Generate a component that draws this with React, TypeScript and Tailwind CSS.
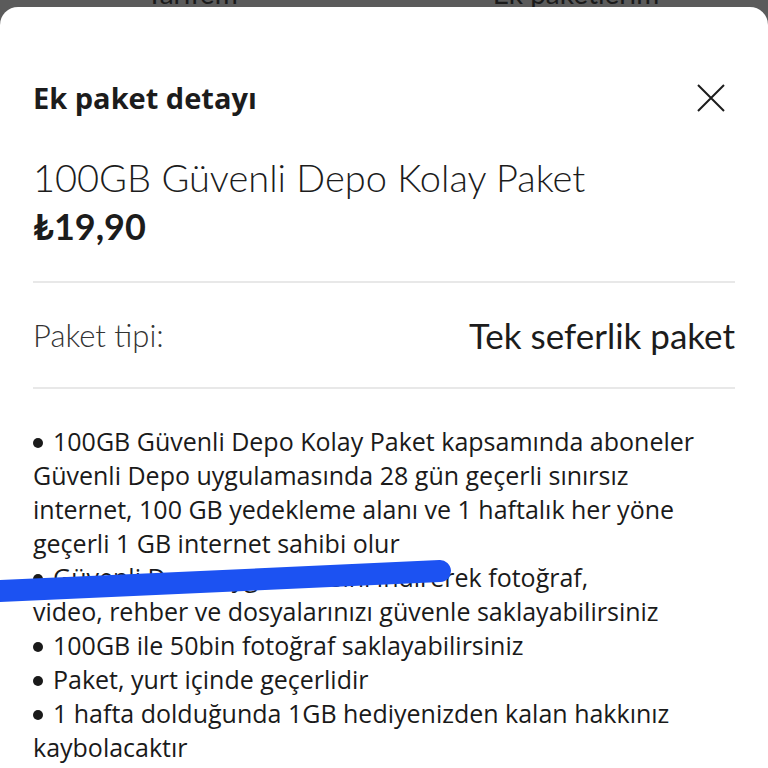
import { Fragment } from 'react'

const bullets = [
    ['100GB Güvenli Depo Kolay Paket kapsamında aboneler', 'Güvenli Depo uygulamasında 28 gün geçerli sınırsız', 'internet, 100 GB yedekleme alanı ve 1 haftalık her yöne', 'geçerli 1 GB internet sahibi olur'],
    ['Güvenli Depo uygulamasını indirerek fotoğraf,', 'video, rehber ve dosyalarınızı güvenle saklayabilirsiniz'],
    ['100GB ile 50bin fotoğraf saklayabilirsiniz'],
    ['Paket, yurt içinde geçerlidir'],
    ['1 hafta dolduğunda 1GB hediyenizden kalan hakkınız', 'kaybolacaktır'],
]

export default function App() {
    return (
        <Fragment>
            <div className="relative w-[768px] h-[768px] overflow-hidden bg-[#5b5b5b] font-['Lato',sans-serif]">
                <div className="h-[7px] overflow-hidden">
                    <div className="flex -mt-[24px] text-[28px] leading-[34px] text-[#1a1a1a]">
                        <span className="w-[384px] text-center">Tarifem</span>
                        <span className="w-[384px] text-center">Ek paketlerim</span>
                    </div>
                </div>
                <div className="bg-white rounded-t-[18px] h-[761px] px-[33px] text-[#1c1c1c]">
                    <div className="flex items-center justify-between pt-[74px]">
                        <h1 className="text-[29px] leading-[34px] font-bold font-['Open_Sans',sans-serif]">Ek paket detayı</h1>
                        <svg width="30" height="30" viewBox="0 0 30 30" className="mr-[9px]">
                            <path d="M2 2 L28 28 M28 2 L2 28" stroke="#1c1c1c" strokeWidth="2" />
                        </svg>
                    </div>
                    <p className="mt-[40px] text-[38px] leading-[44px] font-light">100GB Güvenli Depo Kolay Paket</p>
                    <p className="mt-[6px] text-[36px] leading-[42px] font-bold">₺19,90</p>
                    <div className="mt-[34px] border-t-2 border-[#e8e8e8]" />
                    <div className="flex items-center justify-between h-[104px]">
                        <span className="text-[31px] font-light text-[#333]">Paket tipi:</span>
                        <span className="text-[35px]">Tek seferlik paket</span>
                    </div>
                    <div className="border-t-2 border-[#e8e8e8]" />
                    <div className="mt-[35px] text-[25px] leading-[34px] text-[#1a1a1a] font-['Open_Sans',sans-serif] whitespace-nowrap">
                        {bullets.map((b) => (
                            <div key={b[0]}>
                                {b.map((l, i) => (
                                    <p key={l}>
                                        {i === 0 && <span className="inline-block w-[10px] h-[10px] rounded-full bg-[#1a1a1a] mr-[10px] align-[3px]" />}
                                        {l}
                                    </p>
                                ))}
                            </div>
                        ))}
                    </div>
                </div>
                <svg className="absolute left-0 top-0 pointer-events-none" width="768" height="768">
                    <line x1="-20" y1="592" x2="440" y2="571" stroke="#1c52f2" strokeWidth="22" strokeLinecap="round" />
                </svg>
            </div>
        </Fragment>
    )
}
